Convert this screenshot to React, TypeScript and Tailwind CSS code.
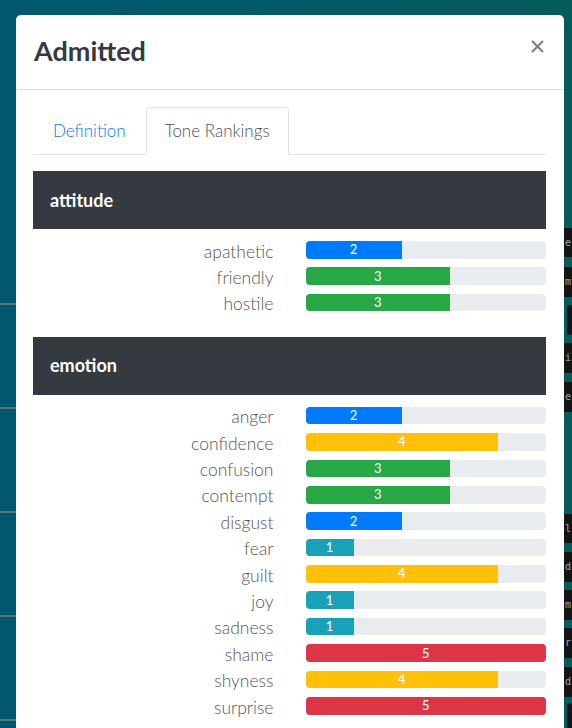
import { useState } from "react";

type Tone = { name: string; value: number; color: string };

const sections: { title: string; tones: Tone[] }[] = [
  {
    title: "attitude",
    tones: [
      { name: "apathetic", value: 2, color: "bg-[#007bff]" },
      { name: "friendly", value: 3, color: "bg-[#28a745]" },
      { name: "hostile", value: 3, color: "bg-[#28a745]" },
    ],
  },
  {
    title: "emotion",
    tones: [
      { name: "anger", value: 2, color: "bg-[#007bff]" },
      { name: "confidence", value: 4, color: "bg-[#ffc107]" },
      { name: "confusion", value: 3, color: "bg-[#28a745]" },
      { name: "contempt", value: 3, color: "bg-[#28a745]" },
      { name: "disgust", value: 2, color: "bg-[#007bff]" },
      { name: "fear", value: 1, color: "bg-[#17a2b8]" },
      { name: "guilt", value: 4, color: "bg-[#ffc107]" },
      { name: "joy", value: 1, color: "bg-[#17a2b8]" },
      { name: "sadness", value: 1, color: "bg-[#17a2b8]" },
      { name: "shame", value: 5, color: "bg-[#dc3545]" },
      { name: "shyness", value: 4, color: "bg-[#ffc107]" },
      { name: "surprise", value: 5, color: "bg-[#dc3545]" },
    ],
  },
];

// slices of the page that peek out on the right, behind the modal
const bands: { h: string; dark: boolean; text?: string; box?: boolean }[] = [
  { h: "h-[228px]", dark: false },
  { h: "h-[29px]", dark: true, text: "e" },
  { h: "h-[10px]", dark: false },
  { h: "h-[30px]", dark: true, text: "m" },
  { h: "h-[8px]", dark: false },
  { h: "h-[30px]", dark: false, box: true },
  { h: "h-[8px]", dark: false },
  { h: "h-[30px]", dark: true, text: "i" },
  { h: "h-[9px]", dark: false },
  { h: "h-[30px]", dark: true, text: "e" },
  { h: "h-[102px]", dark: false },
  { h: "h-[29px]", dark: true, text: "l" },
  { h: "h-[9px]", dark: false },
  { h: "h-[30px]", dark: true, text: "d" },
  { h: "h-[8px]", dark: false },
  { h: "h-[30px]", dark: true, text: "m" },
  { h: "h-[8px]", dark: false },
  { h: "h-[30px]", dark: true, text: "r" },
  { h: "h-[9px]", dark: false },
  { h: "h-[30px]", dark: true, text: "d" },
  { h: "h-[6px]", dark: false },
  { h: "h-[30px]", dark: false, box: true },
];

function ToneRow({ tone }: { tone: Tone }) {
  return (
    <div className="grid grid-cols-2 h-[26.4px] items-center">
      <div className="pr-4 pt-[3px] text-right text-[17.5px] font-light text-[#555] leading-none">{tone.name}</div>
      <div className="pl-4">
        <div className="h-[17.6px] rounded bg-[#e9ecef] overflow-hidden flex">
          <div
            className={`${tone.color} h-full flex items-center justify-center text-white text-[13px] leading-none`}
            style={{ width: `${(tone.value / 5) * 100}%` }}
          >
            {tone.value}
          </div>
        </div>
      </div>
    </div>
  );
}

export default function App() {
  const [tab, setTab] = useState("tones");

  return (
    <div className="relative h-[728px] w-[572px] overflow-hidden bg-gradient-to-r from-[#02586f] to-[#055b5c] font-['Lato',sans-serif]">
      {/* Page behind the modal */}
      <div className="flex h-full justify-between">
        <div className="w-[16px] flex flex-col pt-[303px] gap-[102px]">
          {[0, 1, 2, 3, 4].map((i) => (
            <div key={i} className="h-[2px] bg-[#557479]" />
          ))}
        </div>
        <div className="w-[8px] flex flex-col">
          {bands.map((b, i) => (
            <div
              key={i}
              className={`${b.h} shrink-0 ${b.dark ? "bg-[#141517]" : ""} flex items-center overflow-hidden text-[10px] text-[#9da3a8] font-['DejaVu_Sans_Mono',monospace] leading-none`}
            >
              {b.box && <div className="ml-[3px] h-full w-[10px] rounded bg-[#141517]" />}
              {b.text && <span className="pl-[1px]">{b.text}</span>}
            </div>
          ))}
        </div>
      </div>

      {/* Modal */}
      <div className="absolute left-[16px] top-[15px] w-[548px] rounded-[5px] bg-white pb-8">
        <div className="flex h-[75px] items-center justify-between border-b border-[#dee2e6] pl-[18px] pr-[16px] pb-[3px]">
          <h4 className="text-[27px] font-bold text-[#343a40] leading-none">Admitted</h4>
          <button className="p-1 mb-[8px] text-[#808080]" aria-label="Close">
            <svg width="13" height="13" viewBox="0 0 13 13">
              <path d="M1 1 L12 12 M12 1 L1 12" stroke="currentColor" strokeWidth="2.2" strokeLinecap="butt" />
            </svg>
          </button>
        </div>

        <div className="pl-[17px] pr-[18px] pt-[17px]">
          <div className="flex border-b border-[#dee2e6]">
            <button
              onClick={() => setTab("def")}
              className={`-mb-px h-[48px] px-[19px] text-[17px] font-light rounded-t border ${tab === "def" ? "border-[#dee2e6] border-b-white text-[#495057]" : "border-transparent text-[#007bff]"}`}
            >
              Definition
            </button>
            <button
              onClick={() => setTab("tones")}
              className={`-mb-px h-[48px] px-[18px] text-[17px] font-light rounded-t border ${tab === "tones" ? "border-[#dee2e6] border-b-white text-[#495057]" : "border-transparent text-[#007bff]"}`}
            >
              Tone Rankings
            </button>
          </div>

          <div className="pt-[16px]">
            {sections.map((s) => (
              <div key={s.title} className="mb-[21px]">
                <div className="flex h-[58px] items-center bg-[#343a40] px-[17px] text-[18px] font-bold text-white">
                  {s.title}
                </div>
                <div className="pt-[7.6px]">
                  {s.tones.map((t) => (
                    <ToneRow key={t.name} tone={t} />
                  ))}
                </div>
              </div>
            ))}
          </div>
        </div>
      </div>
    </div>
  );
}
